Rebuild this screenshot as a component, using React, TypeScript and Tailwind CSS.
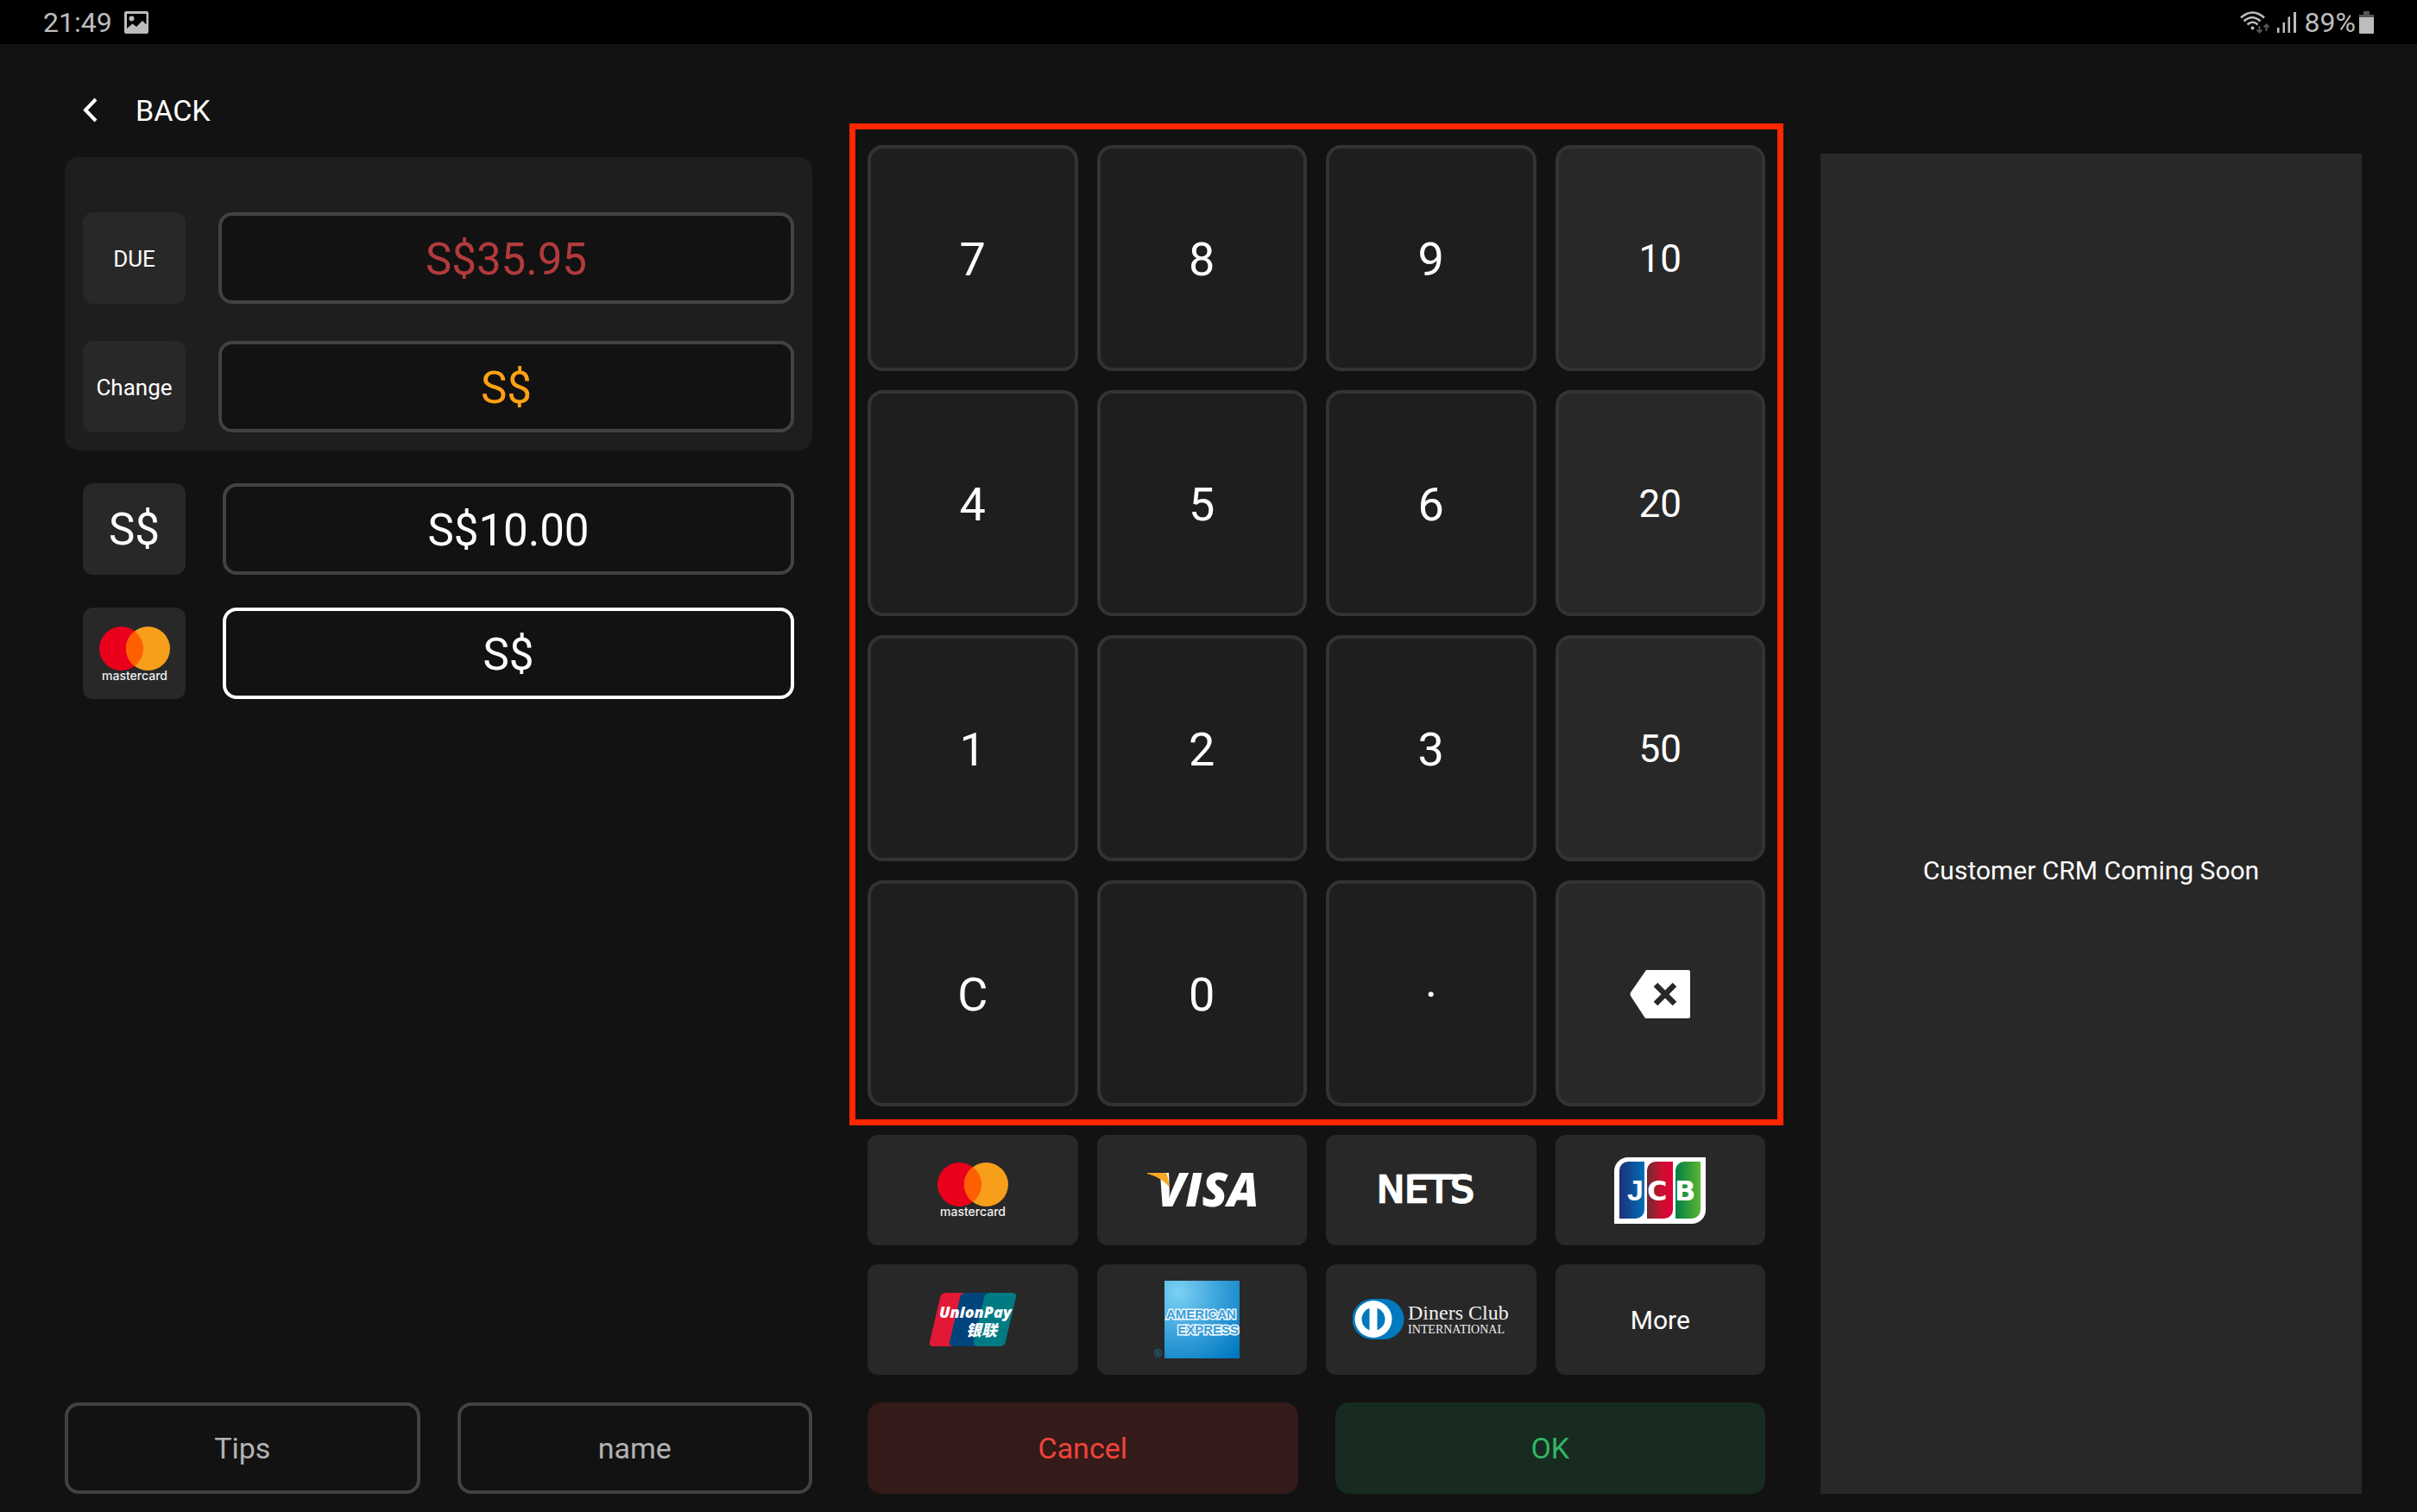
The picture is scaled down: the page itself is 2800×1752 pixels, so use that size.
import { useState } from "react";

const amounts = [
  { id: "cash", title: "Cash" },
  { id: "mastercard", title: "Mastercard" },
];

const keys = ["7", "8", "9", "10", "4", "5", "6", "20", "1", "2", "3", "50", "C", "0", "·", "del"];

const tile = "flex h-[106px] w-[119px] shrink-0 items-center justify-center rounded-xl bg-[#282828] pt-[3px]";
const field =
  "h-[106px] w-full min-w-0 flex-1 rounded-2xl border-4 bg-[#121212] pt-[3px] text-center text-[51px] outline-none";

const MastercardLogo = () => (
  <svg width="82" height="65" viewBox="0 0 82 65" role="img" aria-label="mastercard">
    <circle cx="25.5" cy="25.5" r="25.5" fill="#eb001b" />
    <circle cx="56.5" cy="25.5" r="25.5" fill="#f79e1b" />
    <path d="M41 5.2a25.5 25.5 0 0 1 0 40.6a25.5 25.5 0 0 1 0-40.6z" fill="#ff5f00" />
    <text
      x="41"
      y="62"
      textAnchor="middle"
      fontSize="15"
      fontWeight="500"
      fill="#f0f0f0"
      fontFamily="Inter, sans-serif"
      className="text-[14px]"
    >
      mastercard
    </text>
  </svg>
);

const VisaLogo = () => (
  <svg width="140" height="60" viewBox="-6 -8 140 60" role="img" aria-label="Visa">
    <text
      x="12"
      y="41"
      fontSize="54"
      fontWeight="800"
      fontStyle="italic"
      fill="#fff"
      fontFamily="'Open Sans', sans-serif"
    >
      VISA
    </text>
    <path d="M1 2h20c2 0 3 1 3.500 3.500L27 20C23 12 12 6 1 3z" fill="#f7a823" />
  </svg>
);

const NetsLogo = () => (
  <svg width="130" height="54" viewBox="-5 -10 130 54" role="img" aria-label="NETS">
    <text
      x="-3"
      y="31"
      fontSize="43"
      fill="#fff"
      stroke="#fff"
      strokeWidth="2.500"
      fontFamily="'DejaVu Sans', sans-serif"
    >
      NETS
    </text>
    <path d="M36 -1.500h66v6h-66z" fill="#fff" />
  </svg>
);

const JcbLogo = () => (
  <svg width="106" height="77" viewBox="0 0 106 77" role="img" aria-label="JCB">
    <defs>
      <linearGradient id="jcb-blue">
        <stop offset="0" stopColor="#1f2f79" />
        <stop offset="1" stopColor="#006eb8" />
      </linearGradient>
      <linearGradient id="jcb-red">
        <stop offset="0" stopColor="#6d2a33" />
        <stop offset="0.500" stopColor="#c41230" />
        <stop offset="1" stopColor="#e4003a" />
      </linearGradient>
      <linearGradient id="jcb-green">
        <stop offset="0" stopColor="#007f45" />
        <stop offset="1" stopColor="#5bb531" />
      </linearGradient>
    </defs>
    <path d="M16 0h90v61a16 16 0 0 1-16 16H0V16A16 16 0 0 1 16 0z" fill="#fff" />
    <path d="M16 5h19v56a10 10 0 0 1-10 10H6V15A10 10 0 0 1 16 5z" fill="url(#jcb-blue)" />
    <path d="M48 5h20v56a10 10 0 0 1-10 10H38V15A10 10 0 0 1 48 5z" fill="url(#jcb-red)" />
    <path d="M81 5h19v56a10 10 0 0 1-10 10H71V15A10 10 0 0 1 81 5z" fill="url(#jcb-green)" />
    <g fill="#fff" fontSize="32" fontWeight="700" fontFamily="'DejaVu Sans', sans-serif">
      <text x="34" y="50" textAnchor="end" fontSize="34" fontFamily="'Liberation Sans', sans-serif">J</text>
      <text x="38" y="50">C</text>
      <text x="70" y="50">B</text>
    </g>
  </svg>
);

const UnionPayLogo = () => (
  <svg width="100" height="62" viewBox="0 0 100 62" role="img" aria-label="UnionPay">
    <path d="M19 0h24L30 62H4q-5 0-4-5L12 6q1-6 7-6z" fill="#e21836" />
    <path d="M42 0h28L56 62H28q-6 0-5-5L35 6q1-6 7-6z" fill="#00447c" />
    <path d="M70 0h25q6 0 5 5L88 56q-1 6-7 6H56q-6 0-5-5L63 6q1-6 7-6z" fill="#007b84" />
    <g fill="#fff" fontWeight="800" fontStyle="italic">
      <text x="11" y="29" fontSize="18" fontFamily="'Open Sans', sans-serif">UnionPay</text>
      <text x="42" y="50" fontSize="18" fontFamily="'Noto Sans CJK SC', sans-serif">银联</text>
    </g>
  </svg>
);

const AmexLogo = () => (
  <svg width="112" height="96" viewBox="0 -3 112 96" role="img" aria-label="American Express">
    <defs>
      <radialGradient id="amex" cx="0.180" cy="0.150" r="1.100">
        <stop offset="0" stopColor="#7cd1f3" />
        <stop offset="0.500" stopColor="#3aa3dc" />
        <stop offset="1" stopColor="#0079c1" />
      </radialGradient>
    </defs>
    <path d="M13 0h87v90H13z" fill="url(#amex)" />
    <g
      fill="#3a9fd8"
      stroke="#eef8fd"
      strokeWidth="3"
      paintOrder="stroke"
      fontSize="15"
      fontWeight="700"
      fontFamily="'Liberation Sans', sans-serif"
    >
      <text x="15" y="44">AMERICAN</text>
      <text x="99" y="62" textAnchor="end">EXPRESS</text>
    </g>
    <text x="1" y="89" fontSize="12" fill="#2378a3" fontFamily="'Liberation Sans', sans-serif">®</text>
  </svg>
);

const DinersLogo = () => (
  <svg width="182" height="48" viewBox="0 0 182 48" role="img" aria-label="Diners Club International">
    <path d="M23 0h13a23.500 23.500 0 0 1 0 47H23a23.500 23.500 0 0 1 0-47z" fill="#0079be" />
    <circle cx="24" cy="23.500" r="21.500" fill="#fff" />
    <circle cx="24" cy="23.500" r="13.500" fill="#0079be" />
    <path d="M19.500 9h9v29h-9z" fill="#fff" />
    <g fill="#f0f0f0" fontFamily="'Liberation Serif', serif">
      <text x="64" y="24" fontSize="24">Diners Club</text>
      <text x="64" y="40" fontSize="14">INTERNATIONAL</text>
    </g>
  </svg>
);

const BackspaceIcon = () => (
  <svg width="70" height="56" viewBox="0 0 70 56" aria-hidden="true">
    <path d="M19 0h49q2 0 2 2v52q0 2-2 2H18L1 30q-1-2 0-4z" fill="#fff" />
    <path d="M30 17l22 22M52 17L30 39" stroke="#282828" strokeWidth="6.500" />
  </svg>
);

const payments = [
  { name: "Mastercard", logo: <MastercardLogo /> },
  { name: "Visa", logo: <VisaLogo /> },
  { name: "NETS", logo: <NetsLogo /> },
  { name: "JCB", logo: <JcbLogo /> },
  { name: "UnionPay", logo: <UnionPayLogo /> },
  { name: "American Express", logo: <AmexLogo /> },
  { name: "Diners Club", logo: <DinersLogo /> },
  { name: "More", logo: "More" },
];

const StatusBar = () => (
  <header className="flex h-[51px] items-center justify-between bg-black px-[50px] text-[32px] leading-none text-[#bdbdbd]">
    <div className="flex items-center gap-3.5">
      <span>21:49</span>
      <svg width="28" height="26" viewBox="0 0 28 26" fill="#bdbdbd" aria-hidden="true">
        <path
          fillRule="evenodd"
          d="M2 0h24q2 0 2 2v22q0 2-2 2H2q-2 0-2-2V2q0-2 2-2zM3 3v17l6.500-5.500 4.500 3.500 7-7 4.500 4.500V3zM8.500 5.500a3 3 0 1 1 0 6 3 3 0 0 1 0-6z"
        />
      </svg>
    </div>
    <div className="flex items-center">
      <svg width="34" height="26" viewBox="0 0 34 26" fill="none" className="mr-[9px]" aria-hidden="true">
        <g stroke="#bdbdbd" strokeWidth="2.500">
          <path d="M1 7.500q13.500-12 27 0" />
          <path d="M4.500 11.500q9.500-8.500 19 0" />
          <path d="M8.500 15.500q6-5.500 12 0" />
        </g>
        <circle cx="14.500" cy="19.500" r="2" fill="#bdbdbd" />
        <path d="M22.500 17v7M19.500 21.500l3 3 3-3M30.500 23v-7M27.500 18.500l3-3 3 3" stroke="#555" strokeWidth="2" />
      </svg>
      <svg width="22" height="24" viewBox="0 0 22 24" fill="#bdbdbd" className="mr-2.5" aria-hidden="true">
        <path d="M0 18h2.500v6H0zM6.500 12H9v12H6.500zM12.500 5.500H15V24h-2.500zM19 0h3v24h-3z" />
      </svg>
      <span>89%</span>
      <svg width="17" height="26" viewBox="0 0 17 26" className="ml-1" aria-hidden="true">
        <path d="M5 0h7v4h5v3H0V4h5z" fill="#555" />
        <path d="M0 7h17v18q0 1-1 1H1q-1 0-1-1z" fill="#bdbdbd" />
      </svg>
    </div>
  </header>
);

export default function App() {
  const [active, setActive] = useState("mastercard");
  const [values, setValues] = useState<Record<string, string>>({ cash: "S$10.00", mastercard: "S$" });

  const press = (key: string) => {
    const current = values[active].replace("S$", "");
    let next = current + (key === "·" ? "." : key);
    if (key === "C") next = "";
    if (key === "del") next = current.slice(0, -1);
    setValues({ ...values, [active]: "S$" + next });
  };

  return (
    <div className="flex min-h-screen flex-col bg-[#121212] font-[Roboto,sans-serif] text-white">
      <StatusBar />

      <main className="grid flex-1 grid-cols-[minmax(0,866fr)_minmax(0,1040fr)_minmax(0,627fr)] gap-16 pb-[21px] pl-[75px] pr-16">
        {/* Amounts */}
        <section className="flex flex-col">
          <div className="pb-6 pt-[47px]">
            <button type="button" className="flex h-[60px] items-center gap-11 pl-5 text-[34px]">
              <svg width="18" height="30" viewBox="0 0 18 30" fill="none" aria-hidden="true">
                <path d="M16 2L4 14.500 16 27" stroke="#fff" strokeWidth="4" />
              </svg>
              BACK
            </button>
          </div>

          <div className="flex flex-col gap-[43px] rounded-2xl bg-[#1e1e1e] px-[21px] pb-[21px] pt-16">
            <div className="flex gap-[38px]">
              <label htmlFor="due" className={`${tile} text-[26px]`}>DUE</label>
              <input id="due" readOnly value="S$35.95" className={`${field} border-[#424242] text-[#b33a3c]`} />
            </div>
            <div className="flex gap-[38px]">
              <label htmlFor="change" className={`${tile} text-[26px]`}>Change</label>
              <input id="change" readOnly value="S$" className={`${field} border-[#424242] text-[#ffa114]`} />
            </div>
          </div>

          <div className="mt-[38px] flex flex-col gap-[38px] px-[21px]">
            {amounts.map((a) => (
              <div key={a.id} className="flex gap-[43px]">
                <label htmlFor={a.id} className={`${tile} text-[51px]`}>
                  {a.id === "cash" ? "S$" : <MastercardLogo />}
                </label>
                <input
                  id={a.id}
                  title={a.title}
                  value={values[a.id]}
                  onFocus={() => setActive(a.id)}
                  onChange={(e) => setValues({ ...values, [a.id]: e.target.value })}
                  className={`${field} ${active === a.id ? "border-white" : "border-[#424242]"}`}
                />
              </div>
            ))}
          </div>

          <div className="mt-auto grid grid-cols-2 gap-[43px] text-[34px] text-[#b3b3b3]">
            <button type="button" className="h-[106px] rounded-2xl border-4 border-[#424242]">Tips</button>
            <button type="button" className="h-[106px] rounded-2xl border-4 border-[#424242]">name</button>
          </div>
        </section>

        {/* Keypad and payment methods */}
        <section className="flex flex-col pt-[92px]">
          <div className="-mx-[21px] grid flex-1 grid-cols-4 grid-rows-4 gap-[22px] border-[7px] border-[#ff2600] px-3.5 pb-[15px] pt-[18px]">
            {keys.map((k, i) => (
              <button
                key={k}
                type="button"
                aria-label={k === "del" ? "Backspace" : undefined}
                onClick={() => press(k)}
                className={`flex items-center justify-center rounded-[18px] border-4 border-[#333333] pt-0.5 ${
                  i % 4 === 3 ? "bg-[#282828] text-[44px]" : "bg-[#1e1e1e] text-[54px]"
                }`}
              >
                {k === "del" ? <BackspaceIcon /> : k}
              </button>
            ))}
          </div>

          <div className="mt-[11px] grid grid-cols-4 gap-[22px]">
            {payments.map((p) => (
              <button
                key={p.name}
                type="button"
                aria-label={p.name}
                className="flex h-32 items-center justify-center rounded-xl bg-[#282828] text-[30px]"
              >
                {p.logo}
              </button>
            ))}
          </div>

          <div className="mt-8 grid grid-cols-2 gap-[43px] text-[34px]">
            <button type="button" className="h-[106px] rounded-2xl bg-[#351a1a] text-[#f04438]">Cancel</button>
            <button type="button" className="h-[106px] rounded-2xl bg-[#182b20] text-[#30b566]">OK</button>
          </div>
        </section>

        {/* Customer panel */}
        <aside className="mt-[127px] flex items-center justify-center bg-[#282828] pt-[108px] text-[30px]">
          <p>Customer CRM Coming Soon</p>
        </aside>
      </main>
    </div>
  );
}
